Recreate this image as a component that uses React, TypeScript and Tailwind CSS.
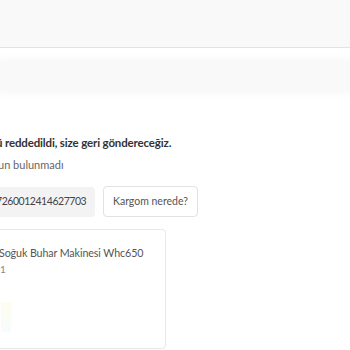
export default function App() {
  return (
    <main className="w-[350px] h-[350px] overflow-hidden bg-white font-['Lato','Liberation_Sans',sans-serif] text-[#333]">
      {/* header strip */}
      <div className="h-[48px] bg-[#f9f9f9] border-b border-[#e3e3e3]"></div>
      {/* faint tab bar */}
      <div className="mt-[12px] h-[32px] bg-[#f9f9f9] shadow-[0_0_8px_4px_#fbfbfb]"></div>

      <section className="pt-[43px]">
        <p className="-ml-[4px] text-[11.5px] font-bold leading-[16px] tracking-[-0.15px] whitespace-nowrap text-[#333]">
          ü reddedildi, size geri göndereceğiz.
        </p>
        <p className="mt-[6px] -ml-[2px] text-[11px] leading-[16px] whitespace-nowrap text-[#666]">
          un bulunmadı
        </p>

        <div className="mt-[13px] flex gap-[8px] items-center">
          <div className="-ml-[4px] h-[30px] w-[99px] rounded-r-[4px] bg-[#f3f3f3] flex items-center text-[10.5px] tracking-[-0.45px] text-[#444]">
            7260012414627703
          </div>
          <button className="h-[31px] px-[9px] rounded-[4px] border border-[#e2e2e2] bg-white text-[10.5px] text-[#555]">
            Kargom nerede?
          </button>
        </div>

        {/* product card */}
        <div className="mt-[12px] -ml-[8px] w-[174px] h-[120px] rounded-[4px] border border-[#e8e8e8] bg-white pt-[15px]">
          <p className="pl-[6px] text-[10.7px] leading-[16px] tracking-[-0.1px] whitespace-nowrap text-[#555]">
            Soğuk Buhar Makinesi Whc650
          </p>
          <p className="mt-[2px] pl-[7px] text-[10px] leading-[12px] text-[#888]">1</p>
          <div className="mt-[27px] ml-[8px] w-[10px] h-[30px] bg-gradient-to-b from-[#fffcee] to-[#f6fcfd]"></div>
        </div>
      </section>
    </main>
  );
}
